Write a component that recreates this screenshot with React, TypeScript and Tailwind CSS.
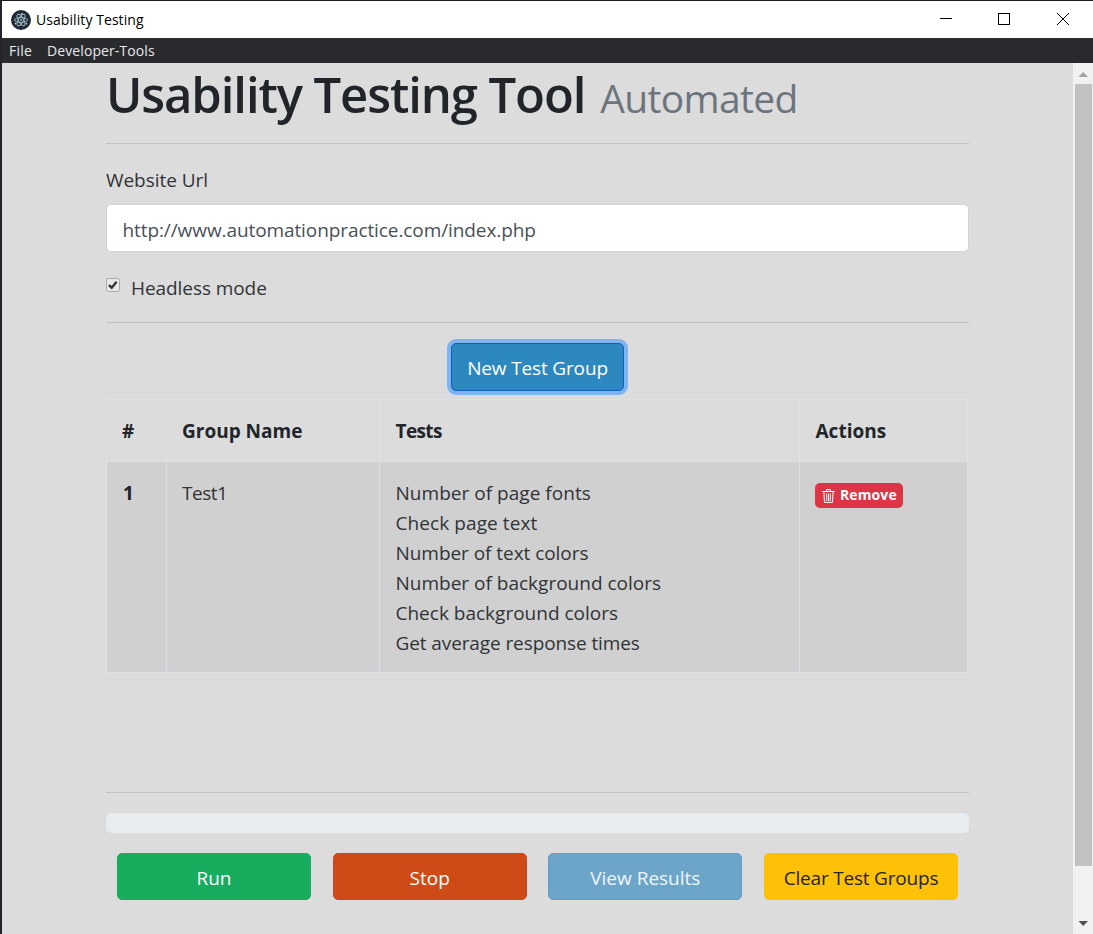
import type { ReactNode } from "react";

const tests: { name: string; cls: string }[] = [
  { name: "Number of page fonts", cls: "tracking-[0.03px]" },
  { name: "Check page text", cls: "tracking-[0.08px]" },
  { name: "Number of text colors", cls: "tracking-[-0.05px]" },
  { name: "Number of background colors", cls: "tracking-[0px]" },
  { name: "Check background colors", cls: "tracking-[0px]" },
  { name: "Get average response times", cls: "tracking-[-0.1px]" },
];

function ElectronIcon() {
  return (
    <svg className="ml-[9px]" width="20" height="20" viewBox="0 0 20 20">
      <circle cx="10" cy="10" r="10" fill="#222a35" />
      <g fill="none" stroke="#a5bfca" strokeWidth="0.9">
        <ellipse cx="10" cy="10" rx="6.4" ry="2.5" />
        <ellipse cx="10" cy="10" rx="6.4" ry="2.5" transform="rotate(60 10 10)" />
        <ellipse cx="10" cy="10" rx="6.4" ry="2.5" transform="rotate(120 10 10)" />
      </g>
      <g fill="#b9d3de">
        <circle cx="10" cy="10" r="0.9" />
        <circle cx="4.6" cy="13.6" r="0.9" />
        <circle cx="15.4" cy="13.6" r="0.9" />
        <circle cx="10.8" cy="3.8" r="0.9" />
      </g>
    </svg>
  );
}

function TitleBar() {
  return (
    <header className="flex h-[37px] items-center bg-white font-['Open_Sans',sans-serif] text-[14px] text-black">
      <ElectronIcon />
      <span className="ml-[5px] tracking-[0.07px]">Usability Testing</span>
      <svg className="ml-auto" width="154" height="37" viewBox="0 0 154 37" fill="none" stroke="#000" shapeRendering="crispEdges">
        <path d="M1 17.5h12" />
        <rect x="59.5" y="12.5" width="11" height="11" />
        <path d="M118 12l12 12M130 12l-12 12" shapeRendering="auto" />
      </svg>
    </header>
  );
}

function MenuBar() {
  return (
    <nav className="flex h-[25px] items-center bg-[#292a2d] pl-[7px] font-['Open_Sans',sans-serif] text-[14px] text-[#e8e8e8]">
      <span className="tracking-[0.2px]">File</span>
      <span className="ml-[15px] tracking-[0.1px]">Developer-Tools</span>
    </nav>
  );
}

function ScrollBar() {
  return (
    <aside className="flex w-5 shrink-0 flex-col items-center bg-[#f1f1f1]">
      <svg width="20" height="21" viewBox="0 0 20 21"><path d="M5.5 14h9.5l-4.75-5z" fill="#a3a3a3" /></svg>
      <div className="h-[782px] w-[17px] bg-[#c1c1c1]" />
      <svg className="mt-auto" width="20" height="21" viewBox="0 0 20 21"><path d="M5.5 8h9.5l-4.75 5z" fill="#505050" /></svg>
    </aside>
  );
}

function TrashIcon() {
  return (
    <svg width="13" height="14" viewBox="0 0 13 14" fill="none" stroke="#fff">
      <path d="M0 2.5h13M4.5 2V.6h4V2M1.9 3l.6 10.4h8L11.1 3M4.6 4.5l.2 7.5M6.5 4.5V12M8.4 4.5L8.2 12" />
    </svg>
  );
}

function Action({ className, children }: { className: string; children: ReactNode }) {
  return (
    <button className={`h-[47px] w-[194px] rounded-[5px] border pt-[2px] ${className}`}>{children}</button>
  );
}

export default function App() {
  return (
    <div className="flex h-[934px] w-[1093px] flex-col overflow-hidden border-t border-l-2 border-t-[#1f1b20] border-l-[#242329] bg-[#dcdcdc]">
      <TitleBar />
      <MenuBar />
      <div className="flex min-h-0 flex-1">
        <main className="flex-1 pr-[104px] pl-[104px] font-['Open_Sans',sans-serif] text-[19px] leading-[30px] text-[#303438]">
          <h1 className="flex h-[81px] items-baseline border-b border-[#c2c2c2] pt-px text-[49px] leading-[60px] font-semibold whitespace-nowrap text-[#212529]">
            <span className="tracking-[-1.1px]">Usability Testing Tool</span>
            <small className="ml-[15px] text-[39px] font-normal tracking-[-0.65px] text-[#6c757d]">Automated</small>
          </h1>
          <div className="mt-[21px] tracking-[-0.05px]">Website Url</div>
          <div className="mt-[9px] h-[48px] rounded-[5px] border border-[#ced4da] bg-white pt-[10px] pl-[15.5px] tracking-[-0.09px] text-[#495057]">
            http://www.automationpractice.com/index.php
          </div>
          <div className="mt-[21px] flex h-[50px] items-start border-b border-[#c2c2c2]">
            <svg className="mt-[5px]" width="14" height="14" viewBox="0 0 14 14">
              <rect x=".5" y=".5" width="13" height="13" rx="2" fill="#e8e8e8" stroke="#a9a9a9" />
              <path d="M3 7.2l2.7 2.5L10.6 3.8" fill="none" stroke="#333" strokeWidth="2.4" />
            </svg>
            <span className="ml-[11px] tracking-[-0.07px]">Headless mode</span>
          </div>
          <div className="flex h-[76px] justify-center pt-[20px]">
            <button className="h-[48px] w-[173px] rounded-[5px] border border-[#0b62c4] bg-[#2e88c0] pt-[2px] tracking-[-0.15px] whitespace-nowrap text-white shadow-[0_0_0_4px_#7fb4ef]">
              New Test Group
            </button>
          </div>
          <table className="h-[274px] w-[862px] table-fixed border-collapse text-left [&_td]:border [&_td]:border-[#dee2e6] [&_th]:border [&_th]:border-[#dee2e6] [&_th]:text-[#212529]">
            <colgroup>
              <col className="w-[60px]" />
              <col className="w-[213px]" />
              <col className="w-[420px]" />
              <col className="w-[168px]" />
            </colgroup>
            <thead>
              <tr className="h-[62px] bg-[#dcdcdd]">
                <th className="pl-[15px]">#</th>
                <th className="pl-[15px]">Group Name</th>
                <th className="pl-[15.5px] tracking-[-0.6px]">Tests</th>
                <th className="pl-[15.5px]">Actions</th>
              </tr>
            </thead>
            <tbody>
              <tr className="bg-[#d0d0d0] align-top">
                <th className="pt-[16px] pl-[16px]">1</th>
                <td className="pt-[16px] pl-[15px] tracking-[-0.5px]">Test1</td>
                <td className="pt-[16px] pl-[15.5px]">
                  {tests.map((t) => (
                    <div key={t.name}><span className={t.cls}>{t.name}</span></div>
                  ))}
                </td>
                <td className="pt-[21px] pl-[15px]">
                  <button className="flex h-[25px] w-[88px] items-center rounded-[5px] bg-[#dc3545] pl-[7px] text-[14px] font-bold text-white">
                    <TrashIcon />
                    <span className="mb-[2px] ml-[5px] tracking-[0.1px]">Remove</span>
                  </button>
                </td>
              </tr>
            </tbody>
          </table>
          <div className="mt-[119px] h-px bg-[#c2c2c2]" />
          <div className="mt-[20px] h-[20px] rounded-[5px] bg-[#e9ecef]" />
          <div className="mt-[20px] flex justify-between px-[11px] text-white">
            <Action className="border-[#18ac5f] bg-[#18ac5f]">Run</Action>
            <Action className="border-[#cf4030] bg-[#ce4a17]">Stop</Action>
            <Action className="border-[#5b9fd8] bg-[#6da5c9] text-[#eef5fa]">View Results</Action>
            <Action className="border-[#ffc107] bg-[#ffc008] tracking-[-0.2px] text-[#212529]">Clear Test Groups</Action>
          </div>
        </main>
        <ScrollBar />
      </div>
    </div>
  );
}
